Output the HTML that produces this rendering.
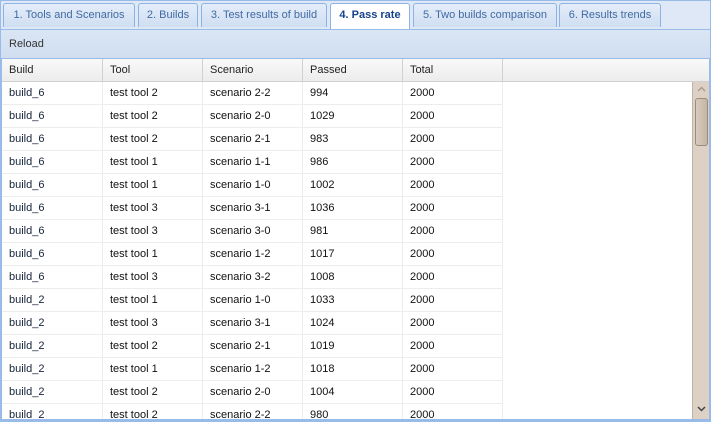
<!DOCTYPE html><html><head><style>
*{margin:0;padding:0;box-sizing:border-box}
body{width:711px;height:422px;overflow:hidden;background:#fff;font-family:"Liberation Sans",sans-serif;font-size:11px;position:relative}
.strip{position:absolute;left:0;top:0;width:711px;height:30px;background:#dfe8f6;border:1px solid #99bbe8;border-bottom:none}
.tab{position:absolute;top:3px;height:24px;border:1px solid #8db2e3;border-bottom:none;border-radius:3px 3px 0 0;background:linear-gradient(#e4edf9,#cfdef2);color:#416aa3;line-height:22px;text-align:center;font-size:11px}
.tab.a{background:#fff;height:27px;color:#15428b;font-weight:bold;top:3px}
.tb{position:absolute;left:0;top:29px;width:711px;height:30px;background:linear-gradient(#dbe6f4,#d0def0);border:1px solid #99bbe8;color:#333;padding:8px 0 0 8px}
.hd{position:absolute;left:2px;top:59px;width:707px;height:23px;background:linear-gradient(#f9f9f9,#ececec);border-bottom:1px solid #d0d0d0}
.hd div{position:absolute;top:0;height:22px;line-height:22px;padding-left:7px;border-right:1px solid #d0d0d0;color:#222}
.frame{position:absolute;left:0;top:59px;width:711px;height:363px;border-style:solid;border-color:#99bbe8;border-width:0 2px 3px 2px}
.clip{position:absolute;left:0;top:82px;width:711px;height:337px;overflow:hidden}
.row{position:absolute;left:2px;width:500px;height:23px;border-bottom:1px solid #ededed}
.row div{position:absolute;top:0;height:23px;line-height:23px;padding-left:7px;border-right:1px solid #ededed;color:#111}
.sb{position:absolute;left:692px;top:82px;width:17px;height:337px;background:#ddd0c4;border-left:1px solid #c0b2a4}
.th{position:absolute;left:2px;top:16px;width:13px;height:48px;border:1px solid #9c8b7b;border-radius:3px;background:linear-gradient(90deg,#d8cbbd,#c6b5a4)}
</style></head><body>
<div class="strip"></div>
<div class="tab" style="left:3px;width:132px">1. Tools and Scenarios</div>
<div class="tab" style="left:138px;width:60px">2. Builds</div>
<div class="tab" style="left:201px;width:126px">3. Test results of build</div>
<div class="tab a" style="left:330px;width:80px">4. Pass rate</div>
<div class="tab" style="left:413px;width:144px">5. Two builds comparison</div>
<div class="tab" style="left:559px;width:102px">6. Results trends</div>
<div class="tb">Reload</div>
<div class="hd"><div style="left:0;width:101px">Build</div><div style="left:101px;width:100px">Tool</div><div style="left:201px;width:100px">Scenario</div><div style="left:301px;width:100px">Passed</div><div style="left:401px;width:100px">Total</div></div>
<div class="clip" id="rows"></div>
<div class="sb"><svg style="position:absolute;left:4px;top:4px" width="9" height="6"><path d="M1 5L4.5 1.5L8 5" fill="none" stroke="#a89888" stroke-width="1.3"/></svg><div class="th"></div><svg style="position:absolute;left:4px;top:324px" width="9" height="6"><path d="M1 1L4.5 4.5L8 1" fill="none" stroke="#444" stroke-width="1.5"/></svg></div>
<div class="frame"></div>
<script>
var d=[["build_6","test tool 2","scenario 2-2","994"],["build_6","test tool 2","scenario 2-0","1029"],["build_6","test tool 2","scenario 2-1","983"],["build_6","test tool 1","scenario 1-1","986"],["build_6","test tool 1","scenario 1-0","1002"],["build_6","test tool 3","scenario 3-1","1036"],["build_6","test tool 3","scenario 3-0","981"],["build_6","test tool 1","scenario 1-2","1017"],["build_6","test tool 3","scenario 3-2","1008"],["build_2","test tool 1","scenario 1-0","1033"],["build_2","test tool 3","scenario 3-1","1024"],["build_2","test tool 2","scenario 2-1","1019"],["build_2","test tool 1","scenario 1-2","1018"],["build_2","test tool 2","scenario 2-0","1004"],["build_2","test tool 2","scenario 2-2","980"]];
var h="";d.forEach(function(r,i){h+='<div class="row" style="top:'+(i*23)+'px"><div style="left:0;width:101px;color:#15233b">'+r[0]+'</div><div style="left:101px;width:100px">'+r[1]+'</div><div style="left:201px;width:100px">'+r[2]+'</div><div style="left:301px;width:100px">'+r[3]+'</div><div style="left:401px;width:100px">2000</div></div>'});
document.getElementById("rows").innerHTML=h;
</script>
</body></html>
